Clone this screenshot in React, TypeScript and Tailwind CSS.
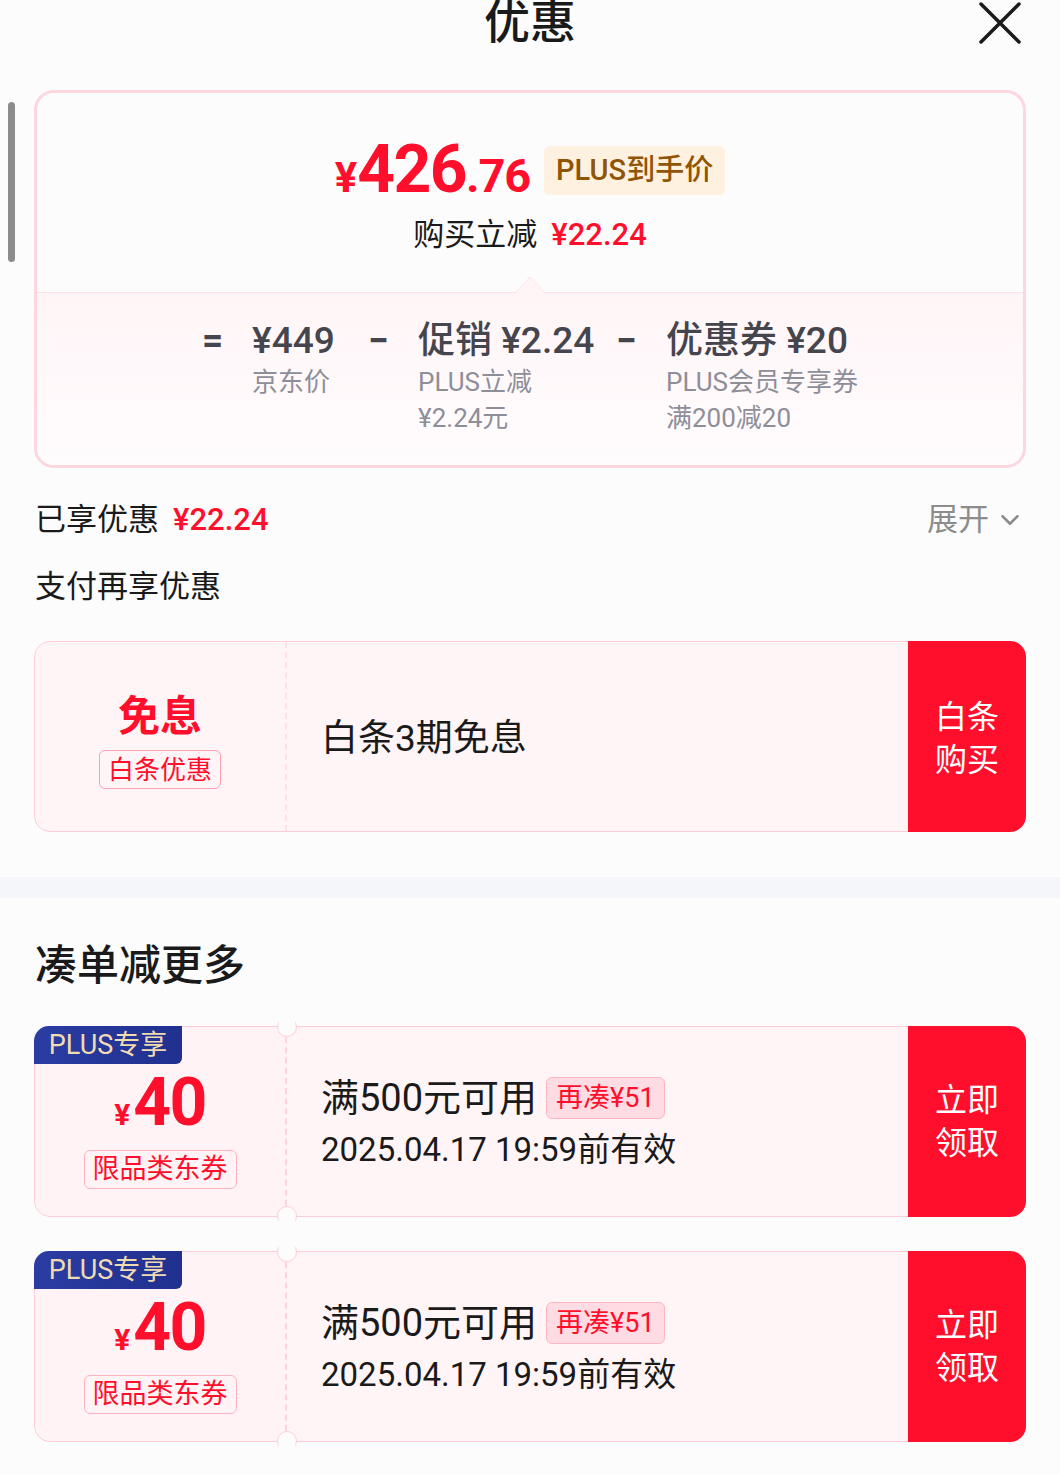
import { ChevronDown } from 'lucide-react';

const font = { fontFamily: 'Roboto, "Noto Sans CJK SC", sans-serif' };

const Coupon = () => (
  <div className="relative flex h-[191px] rounded-[16px] border border-[#ffcdd8] bg-[#fff5f7]">
    {/* notches */}
    <div className="absolute left-[242px] top-[-10px] h-[20px] w-[20px] rounded-full border border-[#ffcdd8] bg-[#fcfcfd]" />
    <div className="absolute left-[242px] bottom-[-10px] h-[20px] w-[20px] rounded-full border border-[#ffcdd8] bg-[#fcfcfd]" />
    <div className="absolute left-[244px] top-[-12px] h-[12px] w-[16px] bg-[#fcfcfd]" />
    <div className="absolute left-[244px] bottom-[-12px] h-[12px] w-[16px] bg-[#fcfcfd]" />

    <div className="flex w-[252px] flex-col items-center rounded-l-[16px] border-r-2 border-dashed border-[#ffd3dc] bg-[#fff3f5]">
      <div className="self-start flex h-[38px] w-[148px] items-center justify-center rounded-tl-[15px] rounded-br-[6px] bg-gradient-to-r from-[#2b3da3] to-[#20308f] text-[27px] leading-none text-[#f1dbb1] -ml-px -mt-px">
        PLUS专享
      </div>
      <div className="mt-[6px] flex items-baseline text-[#ff0f2b] font-bold leading-none">
        <span className="text-[30px]">¥</span>
        <span className="ml-[3px] text-[66px] tracking-tight">40</span>
      </div>
      <div className="mt-[14px] flex h-[39px] items-center rounded-[6px] border border-[#ffb3c0] px-[8px] text-[27px] leading-none text-[#ff0f2b]">
        限品类东券
      </div>
    </div>

    <div className="flex flex-1 flex-col justify-center pl-[34px]">
      <div className="flex items-center">
        <span className="text-[38px] leading-none text-[#1a1a1a]">满500元可用</span>
        <span className="ml-[9px] flex h-[42px] items-center rounded-[6px] border border-[#ffb5c2] bg-[#ffdce3] px-[9px] text-[27px] leading-none text-[#ff0f2b]">
          再凑¥51
        </span>
      </div>
      <div className="mt-[14px] text-[33px] leading-none text-[#1a1a1a]">2025.04.17 19:59前有效</div>
    </div>

    <div className="-m-px flex w-[118px] flex-col items-center justify-center rounded-r-[16px] bg-[#ff0f2b] text-[32px] leading-[43px] text-white">
      <span>立即</span>
      <span>领取</span>
    </div>
  </div>
);

const Part = ({ main, lines, w }: { main: React.ReactNode; lines: string[]; w: string }) => (
  <div className={`flex flex-col ${w}`}>
    <div className="h-[44px] whitespace-nowrap text-[37px] font-medium leading-[44px] text-[#45454d]">{main}</div>
    {lines.map((l) => (
      <div key={l} className="mt-[2px] h-[34px] whitespace-nowrap text-[26px] leading-[34px] text-[#8e8e99]">
        {l}
      </div>
    ))}
  </div>
);

const Op = ({ children }: { children: string }) => (
  <div className="h-[44px] w-[25px] text-center text-[37px] font-bold leading-[44px] text-[#45454d]">{children}</div>
);

export default function App() {
  return (
    <div className="relative min-h-[1474px] w-[1060px] overflow-hidden bg-[#fcfcfd] pb-[32px]" style={font}>
      {/* scrollbar */}
      <div className="absolute left-[8px] top-[102px] h-[160px] w-[7px] rounded-full bg-[#8c8c8c]" />

      {/* header */}
      <div className="relative flex h-[90px] justify-center">
        <div className="-mt-[6px] text-[46px] font-medium leading-[56px] text-[#1a1a1a]">优惠</div>
        <svg className="absolute right-[38px] top-[1px]" width="44" height="44" viewBox="0 0 44 44">
          <path d="M3 3L41 41M41 3L3 41" stroke="#1a1a1a" strokeWidth="3.5" strokeLinecap="round" />
        </svg>
      </div>

      {/* price card */}
      <div className="mx-[34px] overflow-hidden rounded-[20px] border-[3px] border-[#fdd6df]">
        <div className="flex h-[199px] flex-col items-center pt-[44px]">
          <div className="flex items-center">
            <div className="flex items-baseline font-bold leading-none text-[#ff0f2b]">
              <span className="text-[42px]">¥</span>
              <span className="text-[66px] tracking-tight">426</span>
              <span className="text-[47px] tracking-tight">.76</span>
            </div>
            <div className="ml-[14px] flex h-[49px] items-center rounded-[6px] bg-[#fff1df] px-[12px] text-[29px] font-medium leading-none text-[#8f5406]">
              PLUS到手价
            </div>
          </div>
          <div className="mt-[16px] flex items-center text-[31px] leading-none">
            <span className="text-[#1a1a1a]">购买立减</span>
            <span className="ml-[14px] font-medium text-[#ff0f2b]">¥22.24</span>
          </div>
        </div>
        <div className="relative border-t border-[#fde3e9] bg-gradient-to-b from-[#fff5f7] to-[#fffcfd] pb-[30px] pt-[26px]">
          <svg className="absolute left-[478px] top-[-17px]" width="30" height="17" viewBox="0 0 30 17">
            <path d="M0 17L15 1L30 17Z" fill="#fff5f7" />
            <path d="M0 17L15 1L30 17" fill="none" stroke="#fde3e9" strokeWidth="1" />
          </svg>
          <div className="flex pl-[163px] gap-[27px]">
            <Op>=</Op>
            <Part w="w-[87px]" main="¥449" lines={['京东价']} />
            <Op>−</Op>
            <Part w="w-[169px]" main="促销 ¥2.24" lines={['PLUS立减', '¥2.24元']} />
            <Op>−</Op>
            <Part w="w-[200px]" main="优惠券 ¥20" lines={['PLUS会员专享券', '满200减20']} />
          </div>
        </div>
      </div>

      {/* savings */}
      <div className="mx-[35px] mt-[36px] flex items-center justify-between">
        <div className="flex items-center text-[31px] leading-none">
          <span className="text-[#1a1a1a]">已享优惠</span>
          <span className="ml-[14px] font-medium text-[#ff0f2b]">¥22.24</span>
        </div>
        <div className="flex items-center text-[31px] leading-none text-[#8c8c8c]">
          展开
          <ChevronDown className="ml-[6px] h-[30px] w-[30px]" strokeWidth={2} />
        </div>
      </div>
      <div className="mx-[35px] mt-[36px] text-[31px] leading-none text-[#1a1a1a]">支付再享优惠</div>

      {/* baitiao card */}
      <div className="mx-[34px] mt-[39px] flex h-[191px] rounded-[16px] border border-[#ffcdd8] bg-[#fff5f7]">
        <div className="flex w-[252px] flex-col items-center justify-center border-r-2 border-dashed border-[#ffe0e6] pt-[12px]">
          <div className="text-[42px] font-bold leading-none text-[#ff0f2b]">免息</div>
          <div className="mt-[12px] flex h-[39px] items-center rounded-[6px] border border-[#ff9fb2] px-[8px] text-[26px] leading-none text-[#ff0f2b]">
            白条优惠
          </div>
        </div>
        <div className="flex flex-1 items-center pl-[34px] pt-[4px] text-[37px] leading-none text-[#1a1a1a]">白条3期免息</div>
        <div className="-m-px flex w-[118px] flex-col items-center justify-center rounded-r-[16px] bg-[#ff0f2b] pt-[4px] text-[32px] leading-[43px] text-white">
          <span>白条</span>
          <span>购买</span>
        </div>
      </div>

      {/* divider band */}
      <div className="mt-[45px] h-[21px] bg-[#f5f6fa]" />

      <div className="mx-[35px] mt-[47px] text-[42px] font-medium leading-none text-[#1a1a1a]">凑单减更多</div>

      <div className="mx-[34px] mt-[39px] flex flex-col gap-[34px]">
        <Coupon />
        <Coupon />
      </div>
    </div>
  );
}
